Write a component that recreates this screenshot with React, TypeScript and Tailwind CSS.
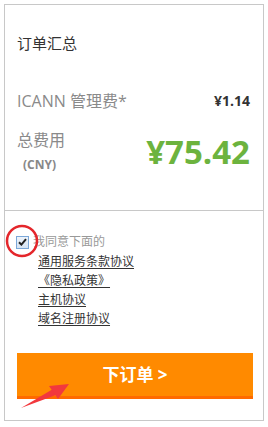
import React from 'react';

const FONT = '"Open Sans", "Noto Sans CJK SC", sans-serif';

const LINKS = ['通用服务条款协议', '《隐私政策》', '主机协议', '域名注册协议'];

function FakeCheckbox() {
  return (
    <span className="flex h-[13px] w-[13px] items-center justify-center border border-[#7aa7d8] bg-gradient-to-b from-[#eef4fb] to-[#d5e3f3]">
      <svg width="9" height="8" viewBox="0 0 9 8">
        <path d="M1 4.2 L3.4 6.6 L8 1.2" fill="none" stroke="#222" strokeWidth="2" />
      </svg>
    </span>
  );
}

export default function App() {
  return (
    <div className="relative h-[427px] w-[268px] bg-white pl-[4px] pt-[4px]" style={{ fontFamily: FONT }}>
      <div className="flex h-[417px] w-[260px] flex-col border border-[#c8c8c8]">
        {/* summary */}
        <div className="flex h-[206px] flex-col border-b border-[#c8c8c8] px-[12px] pt-[28px]">
          <div className="text-[15px] leading-[20px] text-[#333]">订单汇总</div>
          <div className="mt-[38px] flex items-center justify-between">
            <span className="text-[16px] leading-[20px] text-[#8a8a8a]">ICANN 管理费*</span>
            <span className="pr-[1px] text-[14px] font-bold leading-[20px] text-[#333]">¥1.14</span>
          </div>
          <div className="mt-[19px] flex items-center justify-between">
            <div className="flex flex-col">
              <span className="text-[16px] leading-[20px] text-[#8a8a8a]">总费用</span>
              <span className="mt-[7px] pl-[6px] text-[12px] font-bold leading-[16px] text-[#888]">(CNY)</span>
            </div>
            <span className="pr-[1px] text-[33px] font-bold leading-[40px] text-[#6cb33e]">¥75.42</span>
          </div>
        </div>

        {/* agreements */}
        <div className="flex flex-col px-[12px] pt-[21px]">
          <div className="-ml-[1px] flex items-center gap-[4px]">
            <FakeCheckbox />
            <span className="text-[12px] leading-[20px] text-[#999]">我同意下面的</span>
          </div>
          <div className="ml-[21px] flex flex-col">
            {LINKS.map((l) => (
              <a key={l} className="w-fit text-[12px] leading-[19px] text-[#333] underline underline-offset-2">
                {l}
              </a>
            ))}
          </div>
          <button
            type="button"
            className="mt-[25px] flex h-[46px] w-[236px] items-center justify-center border-b-[3px] border-[#ff6a00] bg-[#ff8a00] text-[17px] font-bold text-white"
          >
            下订单 &gt;
          </button>
        </div>
      </div>

      {/* annotation: red circle + arrow */}
      <svg className="pointer-events-none absolute left-0 top-0" width="268" height="427">
        <circle cx="22" cy="241" r="15" fill="none" stroke="#e4262b" strokeWidth="2.5" />
        <path d="M21 408 L53 389 L56 395 Z" fill="#f2383d" />
        <path d="M69 384 L49 386 L58 399 Z" fill="#f2383d" />
      </svg>
    </div>
  );
}
